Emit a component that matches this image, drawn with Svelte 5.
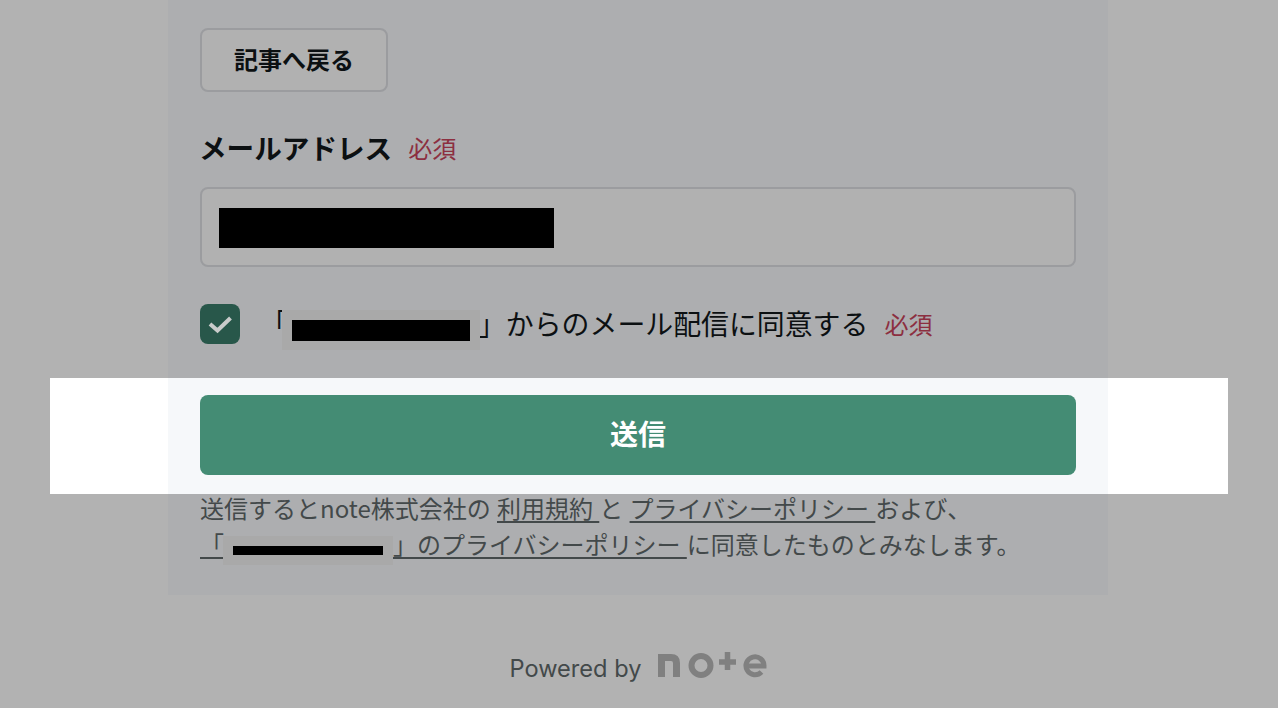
<script lang="ts">
	let agreed = true;
</script>

<div class="page">
	<div class="panel">
		<button class="btn-back" type="button">記事へ戻る</button>

		<div class="field-label">
			<span class="label-text">メールアドレス</span>
			<span class="required">必須</span>
		</div>
		<div class="input">
			<span class="mask mask-email"></span>
		</div>

		<label class="agree">
			<span class="checkbox" class:checked={agreed}>
				<svg viewBox="0 0 24 24" width="24" height="24" fill="none">
					<path d="M2 12 L9.500 18.500 L22.500 6" stroke="#c9cccb" stroke-width="4" />
				</svg>
			</span>
			<span class="agree-text"><span class="bracket">「</span><span class="patch patch-agree"><span class="mask mask-agree"></span></span><span class="bracket">」</span>からのメール配信に同意する</span>
			<span class="required">必須</span>
		</label>

		<div class="spotlight">
			<div class="spotlight-inner">
				<button class="btn-submit" type="button">送信</button>
			</div>
		</div>

		<p class="terms">
			送信するとnote株式会社の <a href="#terms">利用規約&nbsp;</a>と <a href="#privacy">プライバシーポリシー&nbsp;</a>および、<br />
			<a href="#shop">「<span class="patch patch-terms"><span class="mask mask-terms"></span></span>」のプライバシーポリシー&nbsp;</a>に同意したものとみなします。
		</p>
	</div>

	<footer class="powered">
		<span>Powered by</span>
		<svg class="logo" viewBox="0 0 110 28" width="110" height="28" fill="none" stroke="#808080" aria-label="note">
			<path d="M3.500 26 V6.500 H13 Q18.500 6.500 18.500 12 V26" stroke-width="7" />
			<circle cx="43" cy="14.500" r="9.500" stroke-width="6" />
			<path d="M69.500 1 V19 M61 11 H78" stroke-width="5.500" />
			<path d="M88 15 H106 A9 9 0 1 0 103.500 21" stroke-width="5" />
		</svg>
	</footer>
</div>

<style>
	:global(body) {
		margin: 0;
		background: #b2b2b2;
		font-family: "Noto Sans CJK JP", "Noto Sans", sans-serif;
	}

	.page {
		height: 708px;
		overflow: hidden;
		display: flex;
		flex-direction: column;
		align-items: center;
		padding-right: 2px;
		box-sizing: border-box;
	}

	.panel {
		width: 940px;
		box-sizing: border-box;
		height: 595px;
		flex: none;
		padding: 28px 32px 0;
		background: #adaeb0;
	}

	.btn-back {
		display: block;
		width: 188px;
		height: 64px;
		background: #b1b1b1;
		border: 2px solid #9b9c9f;
		border-radius: 8px;
		font-family: inherit;
		font-size: 24px;
		font-weight: 700;
		color: #0c1012;
		padding: 0 0 4px;
	}

	.field-label {
		display: flex;
		align-items: center;
		gap: 16px;
		height: 40px;
		margin-top: 35px;
	}

	.label-text {
		font-size: 27.600px;
		font-weight: 700;
		color: #0c1012;
		margin-left: -1px;
	}

	.required {
		font-size: 24px;
		color: #8c2f40;
	}

	.input {
		display: flex;
		align-items: center;
		height: 80px;
		margin-top: 20px;
		padding: 2px 17px 0;
		box-sizing: border-box;
		background: #b1b1b1;
		border: 2px solid #9b9c9f;
		border-radius: 8px;
	}

	.mask {
		display: block;
		background: #000;
	}

	.mask-email {
		width: 335px;
		height: 40px;
	}

	.agree {
		display: flex;
		align-items: center;
		height: 40px;
		margin-top: 37px;
	}

	.checkbox {
		display: flex;
		align-items: center;
		justify-content: center;
		width: 40px;
		height: 40px;
		flex: none;
		border-radius: 8px;
		background: #28574a;
	}

	.agree-text {
		display: flex;
		align-items: center;
		margin: -2px 0 0 20px;
		font-size: 27.900px;
		color: #0c1012;
		white-space: pre;
	}

	.agree .required {
		margin: -2px 0 0 16px;
	}

	.patch {
		display: inline-block;
		background: #a9a9a9;
	}

	.patch-agree {
		width: 198px;
		height: 40px;
		padding: 10px;
		box-sizing: border-box;
		transform: translateY(7px);
		margin-left: -6px;
		margin-right: -2px;
	}

	.mask-agree {
		width: 178px;
		height: 21px;
	}

	.spotlight {
		margin: 34px -152px 0 -150px;
		padding: 0 120px 0 118px;
		background: #fff;
	}

	.spotlight-inner {
		height: 116px;
		padding: 17px 32px 0;
		box-sizing: border-box;
		background: #f6f8fa;
	}

	.btn-submit {
		display: block;
		width: 100%;
		height: 80px;
		border: 0;
		border-radius: 8px;
		background: #448c74;
		color: #fff;
		font-family: inherit;
		font-size: 28px;
		font-weight: 700;
		padding: 0 0 4px;
	}

	.terms {
		margin: -4px 0 0;
		font-size: 24px;
		line-height: 36px;
		color: #43494a;
		white-space: nowrap;
		word-spacing: 0.900px;
	}

	.terms a {
		color: inherit;
		text-decoration: underline;
		text-underline-offset: 3px;
	}

	.patch-terms {
		width: 170px;
		height: 29px;
		margin-left: -1px;
		padding: 10px;
		box-sizing: border-box;
		vertical-align: -9px;
		transform: translateY(2px);
	}

	.mask-terms {
		width: 150px;
		height: 9px;
	}

	.powered {
		display: flex;
		align-items: flex-end;
		gap: 17px;
		margin-top: 56px;
		font-family: "Inter", "Noto Sans", sans-serif;
		font-size: 23.600px;
		color: #43494a;
	}

	.logo {
		display: block;
		margin: 0 -2px 4px 0;
	}
</style>
